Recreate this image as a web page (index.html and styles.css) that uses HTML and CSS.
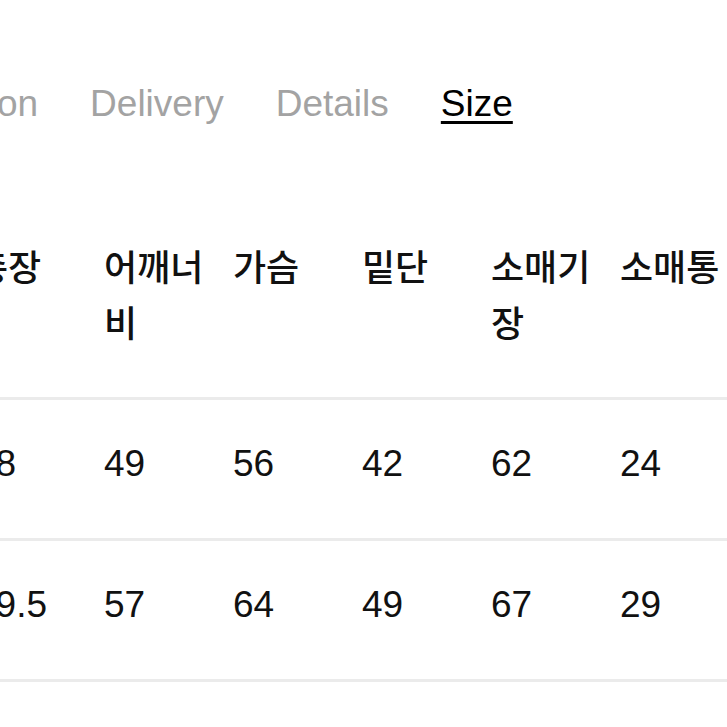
FILE: index.html
```html
<!DOCTYPE html>
<html lang="ko">
<head>
<meta charset="utf-8">
<title>Size</title>
<link rel="stylesheet" href="styles.css">
</head>
<body>
<div class="page">
  <nav class="tabs">
    <span class="tab">Description</span>
    <span class="tab">Delivery</span>
    <span class="tab">Details</span>
    <span class="tab tab-active">Size</span>
  </nav>
  <table class="size-table">
    <colgroup>
      <col class="col"><col class="col"><col class="col"><col class="col"><col class="col"><col class="col"><col class="col">
    </colgroup>
    <thead>
      <tr class="head-row">
        <th>총장</th>
        <th>어깨너비</th>
        <th>가슴</th>
        <th>밑단</th>
        <th>소매기장</th>
        <th>소매통</th>
        <th></th>
      </tr>
    </thead>
    <tbody>
      <tr class="data-row">
        <td>58</td><td>49</td><td>56</td><td>42</td><td>62</td><td>24</td><td></td>
      </tr>
      <tr class="data-row">
        <td>59.5</td><td>57</td><td>64</td><td>49</td><td>67</td><td>29</td><td></td>
      </tr>
    </tbody>
  </table>
</div>
</body>
</html>
```

FILE: styles.css
```css
html, body {
  margin: 0;
  padding: 0;
  background: #ffffff;
}

body {
  width: 727px;
  height: 727px;
  overflow: hidden;
  font-family: "Liberation Sans", "Noto Sans CJK KR", sans-serif;
  color: #111111;
}

.page {
  padding-top: 83px;
}

.tabs {
  display: flex;
  gap: 52px;
  margin-left: -147px;
  white-space: nowrap;
  font-size: 37px;
  line-height: 42px;
}

.tab {
  color: #a3a3a3;
  flex: none;
}

.tab-active {
  color: #000000;
  text-decoration: underline;
  text-decoration-thickness: 3px;
  text-underline-offset: 5px;
}

.size-table {
  margin-top: 112px;
  margin-left: -25px;
  width: 903px;
  table-layout: fixed;
  border-collapse: collapse;
  border-spacing: 0;
}

.col {
  width: 129px;
}

.head-row th {
  padding: 0 8px 48px 0;
  text-align: left;
  vertical-align: top;
  font-family: "Noto Sans CJK KR", "Liberation Sans", sans-serif;
  font-weight: 500;
  font-size: 36px;
  line-height: 56px;
  color: #111111;
  word-break: break-all;
}

.head-row,
.data-row {
  border-bottom: 3px solid #ebebeb;
}

.data-row td {
  padding: 43px 0 53px 0;
  text-align: left;
  vertical-align: top;
  font-size: 37px;
  line-height: 42px;
  color: #111111;
}
```
